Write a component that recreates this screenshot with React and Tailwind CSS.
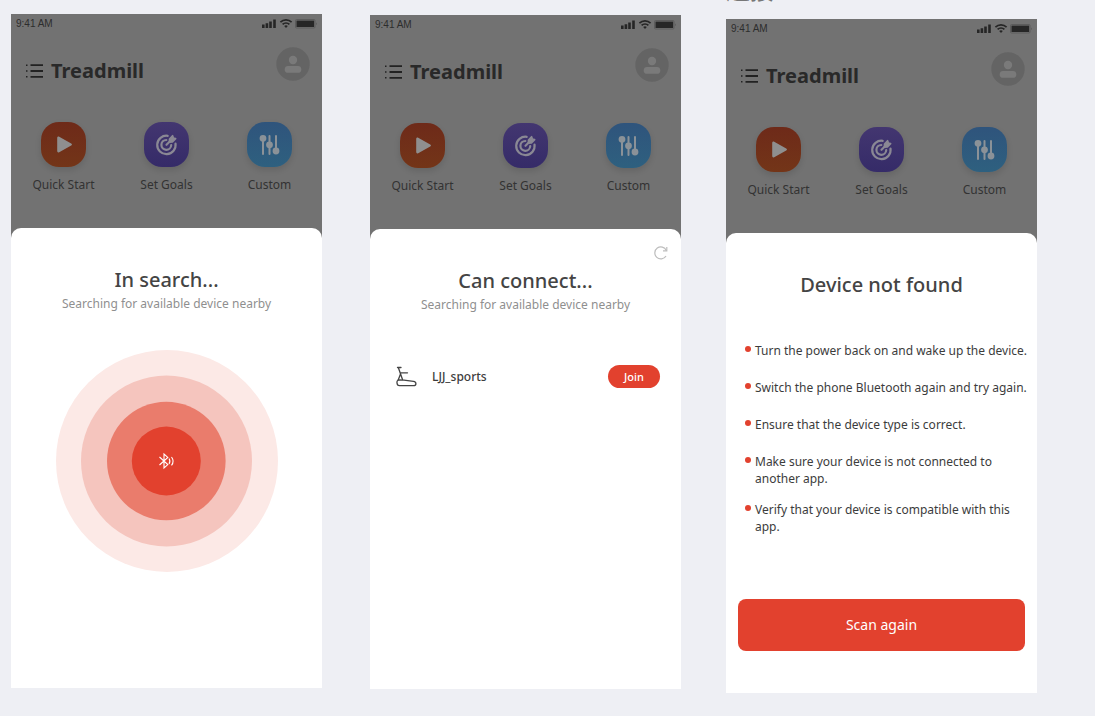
import React from "react";

const actions = [
  {
    label: "Quick Start",
    tile: "bg-linear-to-b from-[#6e2a19] to-[#733518]",
    icon: (
      <path d="M16.200 16c0-1.300 1-1.800 2-1.200l12 6.700c1 .6 1 1.500 0 2.100l-12 6.700c-1 .6-2 0-2-1.200z" fill="#8f8f8f" />
    ),
  },
  {
    label: "Set Goals",
    tile: "bg-linear-to-b from-[#433670] to-[#352b68]",
    icon: (
      <g fill="none" stroke="#8a8894" strokeLinecap="round">
        <path d="M23.700 13.800A9.200 9.200 0 1 0 31.500 21.500" strokeWidth="2.200" />
        <path d="M22.300 18a4.900 4.900 0 1 0 4.900 5.200" strokeWidth="2.200" />
        <path d="M22.500 22.800l5-5" strokeWidth="2.200" />
        <path d="M25.600 17l3-3.200.6 2.200 2.400.6-3.200 3.200-2.900.2z" fill="#8a8894" strokeWidth="1.800" strokeLinejoin="round" />
      </g>
    ),
  },
  {
    label: "Custom",
    tile: "bg-linear-to-b from-[#2f547c] to-[#2e607f]",
    icon: (
      <g stroke="#8b9298" fill="#8b9298" strokeWidth="2" strokeLinecap="round">
        <path d="M16 15v17M22.500 14v18M29 14v17" />
        <circle cx="16" cy="16.300" r="2.400" />
        <circle cx="22.500" cy="22.800" r="2.400" />
        <circle cx="29" cy="29" r="2.400" />
      </g>
    ),
  },
];

const tips = [
  "Turn the power back on and wake up the device.",
  "Switch the phone Bluetooth again and try again.",
  "Ensure that the device type is correct.",
  "Make sure your device is not connected to another app.",
  "Verify that your device is compatible with this app.",
];

function StatusIcons() {
  return (
    <svg width="56" height="12" viewBox="0 0 56 12" fill="#262626" aria-hidden="true">
      <path d="M0 6.500h2.600V10H0zM3.600 5.200h2.600V10H3.600zM7.200 3.600h2.600V10H7.200zM11.200 1.400h2.600V10h-2.600z" />
      <g fill="none" stroke="#262626" strokeWidth="1.700">
        <path d="M18.400 4.200a8 8 0 0 1 11.200 0" />
        <path d="M20.600 6.400a4.800 4.800 0 0 1 6.800 0" />
      </g>
      <path d="M22.200 8.100a2.600 2.600 0 0 1 3.600 0L24 10z" />
      <rect x="33.500" y="1.500" width="19.500" height="8.500" rx="1" fill="none" stroke="#5c5c5c" />
      <rect x="34.500" y="2.600" width="17.600" height="6.400" />
      <path d="M54 4.500c1.200.5 1.200 2 0 2.500z" fill="#5c5c5c" />
    </svg>
  );
}

function Phone({ className, children }) {
  return (
    <section className={"flex flex-col min-h-[674px] bg-[#727272] " + className}>
      <div className="flex h-5 items-center justify-between pl-[5px] pr-1">
        <span className="font-['Liberation_Sans',sans-serif] text-[10px] leading-4 text-[#2d2d2d]">9:41 AM</span>
        <StatusIcons />
      </div>
      <header className="flex items-start justify-between pl-[15px] pr-3 pt-[13px]">
        <div className="flex items-center gap-2 pt-[10px]">
          <button aria-label="Menu" className="block">
            <svg width="17" height="14" viewBox="0 0 17 14" stroke="#222" strokeWidth="1.800" fill="none">
              <path d="M4.500 1.200H17M4.500 7H17M4.500 12.800H17" />
              <path d="M0 1.200h1.500M0 7h1.500M0 12.800h1.500" strokeWidth="1.400" />
            </svg>
          </button>
          <h1 className="text-xl leading-7 font-bold text-[#292929]">Treadmill</h1>
        </div>
        <button aria-label="Profile" className="block">
          <svg width="34" height="34" viewBox="0 0 34 34" fill="#7a7a7a">
            <circle cx="17" cy="17" r="16.700" fill="#646464" />
            <circle cx="17" cy="13" r="4.200" />
            <rect x="8.700" y="19" width="16.600" height="6.800" rx="3.400" />
          </svg>
        </button>
      </header>
      <nav className="grid grid-cols-3 px-px pt-[37px] pb-[33px]">
        {actions.map((a) => (
          <button key={a.label} className="flex flex-col items-center gap-2">
            <span className={"block rounded-[18px] shadow-[0_3px_6px_rgba(0,0,0,0.12)] " + a.tile}>
              <svg width="45" height="45" viewBox="0 0 45 45" aria-hidden="true">{a.icon}</svg>
            </span>
            <span className="text-xs leading-5 text-[#333]">{a.label}</span>
          </button>
        ))}
      </nav>
      <div className="flex flex-1 flex-col rounded-t-[10px] bg-white">{children}</div>
    </section>
  );
}

function SheetTitle({ title, subtitle }) {
  return (
    <div className="text-center">
      <h2 className="text-xl leading-7 font-medium text-[#444]">{title}</h2>
      {subtitle && <p className="text-xs leading-5 text-[#8f8f8f]">{subtitle}</p>}
    </div>
  );
}

export default function App() {
  return (
    <main className="flex min-h-screen items-start overflow-hidden bg-[#eeeff4] pl-[11px] pr-[58px] font-['Noto_Sans','Noto_Sans_CJK_SC',sans-serif]">
      <Phone className="mr-12 mt-3.5 flex-1">
        <div className="pt-[38px]">
          <SheetTitle title="In search..." subtitle="Searching for available device nearby" />
        </div>
        <svg className="mx-auto mt-9" width="222" height="222" viewBox="0 0 222 222" role="img" aria-label="Bluetooth search">
          <circle cx="111" cy="111" r="111" fill="#fce9e6" />
          <circle cx="110.500" cy="111" r="85.500" fill="#f5c5be" />
          <circle cx="110.300" cy="111" r="59.300" fill="#ea7c6c" />
          <circle cx="110.300" cy="111" r="34.500" fill="#e2412e" />
          <g fill="none" stroke="#fff" strokeWidth="1.100">
            <path d="M103.500 107l8.300 7.600-3.800 3.400v-14l3.800 3.400-8.300 7.600" />
            <path d="M113 108.500q1.800 2.700 0 5.400M115.500 107q3.200 4.200 0 8.400" />
          </g>
        </svg>
      </Phone>

      <Phone className="mr-[45px] mt-[15px] flex-1">
        <button aria-label="Refresh" className="mr-[13px] mt-[17px] self-end">
          <svg width="14" height="14" viewBox="0 0 14 14" fill="none" stroke="#bdbdbd" strokeWidth="1.200">
            <path d="M12 10A6 6 0 1 1 12.300 4.500" />
            <path d="M12.800 1v3.800H9" />
          </svg>
        </button>
        <div className="pt-[7px]">
          <SheetTitle title="Can connect..." subtitle="Searching for available device nearby" />
        </div>
        <div className="mt-[50px] flex items-center pl-[26px] pr-[21px]">
          <svg width="22" height="21" viewBox="0 0 22 21" fill="none" stroke="#444" strokeWidth="1.300" strokeLinejoin="round" strokeLinecap="round" aria-hidden="true">
            <path d="M1.500 1.500H5M2.300 1.500l4.200 12M4 6.800h7.500M4.500 8L2.300 13.800" />
            <path d="M3 13.800l5 .4 9.500 1.200c3.200.4 3.200 4.300 0 4.300H3.500c-3.200 0-3.400-5.900-.5-5.900z" />
          </svg>
          <span className="ml-3.5 flex-1 text-xs leading-5 font-medium text-[#3c3c3c]">LJJ_sports</span>
          <button className="h-[23px] w-[52px] rounded-full bg-[#e2412e] text-[11px] leading-4 font-medium text-white">Join</button>
        </div>
      </Phone>

      <div className="flex flex-1 flex-col">
        <h2 className="-mt-[22px] mb-[17px] text-2xl leading-6 text-[#777]">连接</h2>
        <Phone className="">
          <div className="pt-[38px]">
            <SheetTitle title="Device not found" />
          </div>
          <ul className="mt-[43px] flex flex-col gap-3.5 pl-[19px] pr-1 text-xs leading-[17px] text-[#3c3c3c]">
            {tips.map((t) => (
              <li key={t} className="flex min-h-[23px] items-start gap-1">
                <span className="mt-1 size-1.5 shrink-0 rounded-full bg-[#e2412e]" />
                <span>{t}</span>
              </li>
            ))}
          </ul>
          <button className="mx-3 mb-[42px] mt-auto h-13 rounded-lg bg-[#e2412e] text-sm text-white">Scan again</button>
        </Phone>
      </div>
    </main>
  );
}
